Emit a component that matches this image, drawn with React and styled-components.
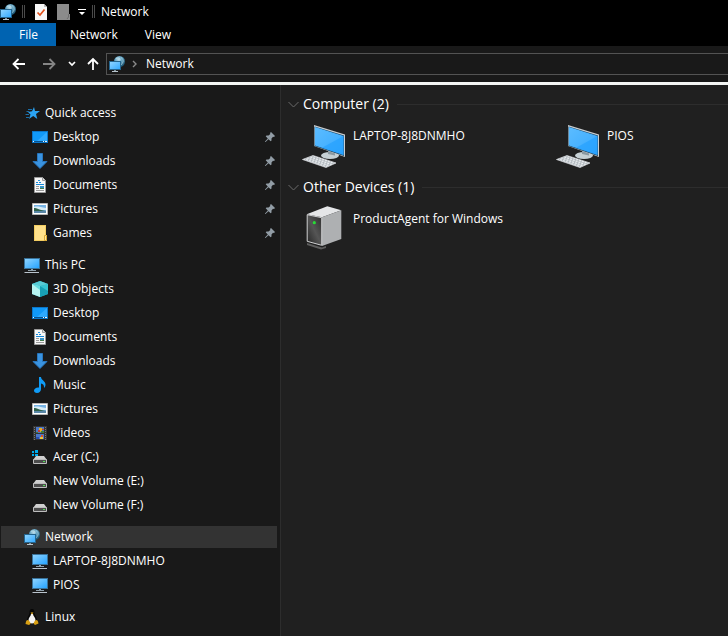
import React from "react";
import styled, { createGlobalStyle } from "styled-components";

const quickAccess = {
  name: "Quick access",
  icon: StarIcon,
  children: [
    { name: "Desktop", icon: DesktopIcon, pinned: true },
    { name: "Downloads", icon: DownloadsIcon, pinned: true },
    { name: "Documents", icon: DocumentsIcon, pinned: true },
    { name: "Pictures", icon: PicturesIcon, pinned: true },
    { name: "Games", icon: FolderIcon, pinned: true },
  ],
};

const thisPc = {
  name: "This PC",
  icon: MonitorIcon,
  children: [
    { name: "3D Objects", icon: CubeIcon },
    { name: "Desktop", icon: DesktopIcon },
    { name: "Documents", icon: DocumentsIcon },
    { name: "Downloads", icon: DownloadsIcon },
    { name: "Music", icon: MusicIcon },
    { name: "Pictures", icon: PicturesIcon },
    { name: "Videos", icon: VideosIcon },
    { name: "Acer (C:)", icon: SystemDriveIcon },
    { name: "New Volume (E:)", icon: DriveIcon },
    { name: "New Volume (F:)", icon: DriveIcon },
  ],
};

const network = {
  name: "Network",
  icon: NetworkIcon,
  selected: true,
  children: [
    { name: "LAPTOP-8J8DNMHO", icon: MonitorIcon },
    { name: "PIOS", icon: MonitorIcon },
  ],
};

const linux = { name: "Linux", icon: LinuxIcon, children: [] };

const groups = [quickAccess, thisPc, network, linux];

const sections = [
  {
    title: "Computer (2)",
    items: [
      { name: "LAPTOP-8J8DNMHO", icon: ComputerIcon },
      { name: "PIOS", icon: ComputerIcon },
    ],
  },
  {
    title: "Other Devices (1)",
    items: [{ name: "ProductAgent for Windows", icon: ServerIcon }],
  },
];

function App() {
  return (
    <Window>
      <GlobalStyle />
      <TitleBar>
        <NetworkIcon />
        <Separator />
        <QuickButton aria-label="Properties">
          <PropertiesIcon />
        </QuickButton>
        <QuickButton aria-label="New folder">
          <NewItemIcon />
        </QuickButton>
        <MenuButton aria-label="Customize Quick Access Toolbar">
          <CustomizeIcon />
        </MenuButton>
        <Separator />
        <Title>Network</Title>
      </TitleBar>
      <Ribbon>
        <Tab $file>File</Tab>
        <Tab>Network</Tab>
        <Tab>View</Tab>
      </Ribbon>
      <Toolbar>
        <NavButton aria-label="Back">
          <ArrowIcon d="M13 7H1.5M6.5 2 1.5 7l5 5" />
        </NavButton>
        <NavButton aria-label="Forward" disabled>
          <ArrowIcon d="M1 7h11.5M7.5 2l5 5-5 5" />
        </NavButton>
        <RecentButton aria-label="Recent locations">
          <svg width="8" height="6" viewBox="0 0 8 6">
            <path d="M1 1l3 3 3-3" fill="none" stroke="#fff" strokeWidth="1.7" />
          </svg>
        </RecentButton>
        <UpButton aria-label="Up">
          <ArrowIcon d="M7 13V2M2 7l5-5 5 5" />
        </UpButton>
        <AddressBar>
          <NetworkIcon />
          <svg width="7" height="8" viewBox="0 0 7 8">
            <path d="M1 1l3 3-3 3" fill="none" stroke="#8a8a8a" strokeWidth="1.4" />
          </svg>
          <Crumb>Network</Crumb>
        </AddressBar>
      </Toolbar>
      <Body>
        <Sidebar>
          {groups.map((group) => (
            <Group key={group.name}>
              <TreeItem item={group} />
              {group.children.map((child) => (
                <TreeItem key={child.name} item={child} nested />
              ))}
            </Group>
          ))}
        </Sidebar>
        <Content>
          {sections.map((section) => (
            <section key={section.title}>
              <SectionHeader>
                <svg width="11" height="7" viewBox="0 0 11 7">
                  <path d="M.5 1l5 5 5-5" fill="none" stroke="#6b6b6b" />
                </svg>
                <h2>{section.title}</h2>
                <Rule />
              </SectionHeader>
              <Tiles>
                {section.items.map(({ name, icon: Icon }) => (
                  <Tile key={name} href="#">
                    <Icon />
                    <span>{name}</span>
                  </Tile>
                ))}
              </Tiles>
            </section>
          ))}
        </Content>
      </Body>
    </Window>
  );
}

function TreeItem({ item, nested }) {
  const Icon = item.icon;
  return (
    <TreeLink href="#" $nested={nested} $selected={item.selected}>
      <Icon />
      <span>{item.name}</span>
      {item.pinned && <PinIcon />}
    </TreeLink>
  );
}

export default App;

/* icons */

function ArrowIcon({ d }) {
  return (
    <svg width="14" height="14" viewBox="0 0 14 14">
      <path d={d} fill="none" stroke="currentColor" strokeWidth="1.8" />
    </svg>
  );
}

function NetworkIcon() {
  return (
    <svg width="16" height="16" viewBox="0 0 16 16">
      <defs>
        <radialGradient id="globe" cx="0.4" cy="0.3" r="0.7">
          <stop offset="0" stopColor="#b9dcea" />
          <stop offset="0.5" stopColor="#5b9dbd" />
          <stop offset="1" stopColor="#1d5673" />
        </radialGradient>
        <linearGradient id="netScreen" x1="0" y1="0" x2="1" y2="1">
          <stop offset="0" stopColor="#8ed4ff" />
          <stop offset="1" stopColor="#35aaff" />
        </linearGradient>
      </defs>
      <circle cx="10.5" cy="5.5" r="5.5" fill="url(#globe)" />
      <path d="M7 2.5c2-1 3.5-.5 4 .5s-1.5 1.5-2 2.5M12 1.5c2 1 2.5 3 2 4.5s-1.5 2-2 3" fill="none" stroke="#d5edf5" strokeOpacity=".5" />
      <path d="M0 5h12v9H0z" fill="#24658f" />
      <path d="M1 6h10v7H1z" fill="url(#netScreen)" />
      <path d="M5 14h2v1H5z" fill="#7f929e" />
      <path d="M3 15h6v1H3z" fill="#b8c4cb" />
    </svg>
  );
}

function PropertiesIcon() {
  return (
    <svg width="12" height="16" viewBox="0 0 12 16">
      <path d="M0 0h9l3 3v13H0z" fill="#f7f7f7" />
      <path d="M9 0v3h3z" fill="#bdbdbd" />
      <path d="M2.5 8.5 5 11l4.5-5.5" fill="none" stroke="#e2511c" strokeWidth="1.7" />
    </svg>
  );
}

function NewItemIcon() {
  return (
    <svg width="13" height="16" viewBox="0 0 13 16">
      <path d="M0 0h12v10h1v6H0z" fill="#8b8b8b" />
      <path d="M11.5 10v3L10 15" fill="none" stroke="#6c6c6c" />
    </svg>
  );
}

function CustomizeIcon() {
  return (
    <svg width="8" height="8" viewBox="0 0 8 8">
      <path d="M0 1h8v1H0zM1 4h6L4 7z" fill="#fff" />
    </svg>
  );
}

function StarIcon() {
  return (
    <svg width="16" height="16" viewBox="0 0 16 16">
      <path d="M10 2l1 4h5l-4 3 1.3 5L9.200 11 5 14l1.500-4.500L4 7l4-.7z" fill="#2ba3f2" />
      <path d="M4 4.500h4M2.500 6.500H5M1.500 9.500H5M2 12.500h3" stroke="#1b6fa8" />
    </svg>
  );
}

function DesktopIcon() {
  return (
    <svg width="16" height="16" viewBox="0 0 16 16">
      <path d="M0 2h16v12H0z" fill="#0b76c9" />
      <path d="M1 3h14v9H1z" fill="#1199f8" />
      <path d="M15 3v9H5z" fill="#2ea9ff" />
      <path d="M1 12h14v1H1z" fill="#07518d" />
      <path d="M1 12h1v1H1zM11 12h1v1h-1zM13 12h2v1h-2z" fill="#e8f5ff" />
    </svg>
  );
}

function DownloadsIcon() {
  return (
    <svg width="16" height="16" viewBox="0 0 16 16">
      <path d="M5.5.5h5v8h4.500L8 15.500 1 8.500h4.500z" fill="#3a93e0" stroke="#2876bd" />
    </svg>
  );
}

function DocumentsIcon() {
  return (
    <svg width="16" height="16" viewBox="0 0 16 16">
      <path d="M2.5.5h8l3 3v12h-11z" fill="#f8f8f8" stroke="#9b9b9b" />
      <path d="M10.5.5v3h3" fill="#ddd" stroke="#9b9b9b" />
      <path d="M4 5.500h2M7 5.500h2M4 7.500h8" stroke="#1687d9" />
      <path d="M6 3.500h2" stroke="#2a96e0" />
      <path d="M4 9.500h3M4 11.500h3M4 13.500h8" stroke="#999" />
      <path d="M8 9h4v3H8z" fill="#3793c6" />
      <path d="M8 11h4v1H8z" fill="#457c4e" />
    </svg>
  );
}

function PicturesIcon() {
  return (
    <svg width="16" height="16" viewBox="0 0 16 16">
      <path d="M.5 2.500h15v11H.5z" fill="#fff" stroke="#b5b5b5" />
      <path d="M2 4h12v8H2z" fill="#77b4e6" />
      <path d="M2 6c3-1 6 0 12 1v2H2z" fill="#d8edf8" />
      <path d="M2 7c3 0 4 1.500 12 3H2z" fill="#30624c" />
      <path d="M2 10h12v2H2z" fill="#5987a7" />
    </svg>
  );
}

function FolderIcon() {
  return (
    <svg width="16" height="16" viewBox="0 0 16 16">
      <path d="M2 0h12v10h1v6H2z" fill="#f3cd62" />
      <path d="M3 1h10v9l-1 5H3z" fill="#ffe18b" />
      <path d="M12.500 15.500v-5h2v5z" fill="#ffe59b" stroke="#d9a935" />
    </svg>
  );
}

function MonitorIcon() {
  return (
    <svg width="16" height="16" viewBox="0 0 16 16">
      <defs>
        <linearGradient id="screen" x1="0" y1="0" x2="1" y2="1">
          <stop offset="0" stopColor="#8dd3ff" />
          <stop offset="1" stopColor="#27a4ff" />
        </linearGradient>
      </defs>
      <path d="M0 1h16v11H0z" fill="#3a7299" />
      <path d="M1 2h14v9H1z" fill="url(#screen)" />
      <path d="M7 12h2v1H7zM4 13h8v1H4z" fill="#91a1ac" />
      <path d="M4 14h8v1H4z" fill="#191919" />
      <path d="M1 15h14v1H0z" fill="#b9c3cc" />
    </svg>
  );
}

function CubeIcon() {
  return (
    <svg width="16" height="16" viewBox="0 0 16 16">
      <path d="M8 0l8 3v10l-8 3-8-3V3z" fill="#26b3c5" />
      <path d="M0 3l8 2v11l-8-3z" fill="#b6f4f1" />
      <path d="M0 3l8 2v4z" fill="#65dde0" />
      <path d="M16 3 8 5v11l8-3z" fill="#18a0b5" />
      <path d="M8 5l8 5V3z" fill="#36c4d1" />
      <path d="M8 0l8 3-8 2-8-2z" fill="#58cbd5" />
    </svg>
  );
}

function MusicIcon() {
  return (
    <svg width="16" height="16" viewBox="0 0 16 16">
      <path d="M7 0h2c0 3 4.500 4 4.500 7.500 0 1.500-.5 2.500-1.500 3.500.3-3-1-4-3-4.500V12c0 2-1.500 4-4 4-2 0-3-1-3-2.500C2 11.500 4.500 10 7 10.500z" fill="#109bf5" />
    </svg>
  );
}

function VideosIcon() {
  return (
    <svg width="16" height="16" viewBox="0 0 16 16">
      <path d="M1 1h14v14H1z" fill="#343434" />
      <path d="M2.500 2v13M13.500 2v13" stroke="#777" strokeDasharray="1 1" />
      <path d="M4 2h8v6H4zM4 9h8v5H4z" fill="#4b78c9" />
      <path d="M7 3h3v4H7z" fill="#e2ae25" />
      <path d="M6 5h2v2H6zM10 4h2v1h-2z" fill="#c83d31" />
      <path d="M9 6h3v2H9zM4 7h2v1H4z" fill="#427b3b" />
      <path d="M9 10h2v2H9z" fill="#d3522e" />
      <path d="M8 12h3v2H8z" fill="#ebc83f" />
      <path d="M4 12h3v2H4z" fill="#2b4fae" />
    </svg>
  );
}

function DriveShape() {
  return (
    <>
      <path d="M4 7h8l3 4H1z" fill="#cfcfcf" />
      <path d="M1.5 10.500h13v4h-13z" fill="#4c4c4c" stroke="#bdbdbd" />
      <path d="M11 12h2v1h-2z" fill="#53df55" />
    </>
  );
}

function DriveIcon() {
  return (
    <svg width="16" height="16" viewBox="0 0 16 16">
      <DriveShape />
    </svg>
  );
}

function SystemDriveIcon() {
  return (
    <svg width="16" height="16" viewBox="0 0 16 16">
      <DriveShape />
      <path d="M0 2h2v2H0zM3 1h3v3H3zM0 5h2v2H0zM3 5h3v2H3z" fill="#00adef" />
    </svg>
  );
}

function LinuxIcon() {
  return (
    <svg width="16" height="16" viewBox="0 0 16 16">
      <path d="M8 0c2 0 2.500 1.500 2.500 4 0 2 2.500 4 2.500 7.500 0 2-2 3.500-5 3.500s-5-1.500-5-3.500C3 8 5.500 6 5.500 4 5.500 1.500 6 0 8 0z" fill="#050505" />
      <path d="M7 5h2c0 2 2.500 3.500 2.500 6 0 2-1.500 3.500-3.500 3.500S4.500 13 4.500 11C4.500 8.500 7 7 7 5z" fill="#f3f3f3" />
      <path d="M6.500 3.500h3L8 5.500z" fill="#e6ad1d" />
      <path d="M3 11l2 .5 1.800 3L5 16l-3.500-1 .5-2.500zM13 11l-2 .5-1.500 3L11 16l3.500-1.500-.5-2z" fill="#d9a013" />
    </svg>
  );
}

function PinIcon() {
  return (
    <svg width="12" height="12" viewBox="0 0 12 12">
      <path d="M7 1l4 4-1 1-1-.3L7.500 7.500v2l-.8.8-2.200-2.100L1.500 11H1v-.5l2.800-3-2.100-2.200.8-.8h2L6.300 3 6 2z" fill="#929da6" />
    </svg>
  );
}

function ComputerIcon() {
  return (
    <svg width="48" height="48" viewBox="0 0 48 48">
      <defs>
        <linearGradient id="bigScreen" x1="0" y1="0" x2="1" y2="1">
          <stop offset="0" stopColor="#5cbcff" />
          <stop offset="1" stopColor="#36a9ff" />
        </linearGradient>
        <pattern id="keys" width="3" height="2" patternUnits="userSpaceOnUse" patternTransform="rotate(20)">
          <path d="M0 0h3v2H0z" fill="#a9b0b6" />
          <path d="M0 0h2.200v1.400H0z" fill="#eceff2" />
        </pattern>
      </defs>
      <ellipse cx="29" cy="34.500" rx="9" ry="3.500" fill="#c6d0d4" />
      <path d="M27 29l7 2.500v3l-7-1.500z" fill="#8b989f" />
      <path d="M13 4l31 9.500V36L13 25z" fill="#c9ced1" />
      <path d="M13.500 5.500 43 14.500v20.500L13.500 25z" fill="#17415e" />
      <path d="M14 6l28.500 9v19L14 24.500z" fill="url(#bigScreen)" />
      <path d="M21 26.800 42.500 15v19z" fill="#1f9fff" fillOpacity=".6" />
      <path d="M1.500 38.500 12 34.500l23 7.500-10 4.500z" fill="url(#keys)" stroke="#dfe3e6" strokeWidth=".7" />
    </svg>
  );
}

function ServerIcon() {
  return (
    <svg width="48" height="48" viewBox="0 0 48 48">
      <defs>
        <linearGradient id="front" x1="1" y1="0" x2="0" y2="1">
          <stop offset="0" stopColor="#2d2d2d" />
          <stop offset=".5" stopColor="#555" />
          <stop offset="1" stopColor="#242424" />
        </linearGradient>
      </defs>
      <path d="M6 39l15 4.500 4-1.500v2l-5 1.500L6 41z" fill="#5e5e5e" />
      <path d="M5.700 10.300 26.300 2.300l14 4L21 13.300z" fill="#e5e6e8" />
      <path d="M21 13.300l19.300-7V35L21 42z" fill="#aeb0b2" />
      <path d="M6.200 10.700 20.700 13.700v27.600L6.200 37.300z" fill="url(#front)" stroke="#d0d1d3" />
      <circle cx="13.300" cy="18.700" r="1.600" fill="#28dc38" />
    </svg>
  );
}

const GlobalStyle = createGlobalStyle`
  * {
    box-sizing: border-box;
  }
  body {
    margin: 0;
    background: #202020;
    color: #fff;
    font-family: "Open Sans", "Noto Sans", sans-serif;
    font-size: 12px;
    line-height: 18px;
  }
  button {
    display: flex;
    align-items: center;
    justify-content: center;
    padding: 0;
    border: 0;
    background: none;
    color: inherit;
    font: inherit;
  }
  a {
    color: inherit;
    text-decoration: none;
  }
  svg {
    display: block;
    flex-shrink: 0;
  }
`;

const Window = styled.div`
  display: flex;
  flex-direction: column;
  min-height: 100vh;
`;

const TitleBar = styled.header`
  display: flex;
  align-items: center;
  height: 23px;
  background: #000;
`;

const Separator = styled.span`
  width: 3px;
  height: 13px;
  margin: 0 6px;
  border: solid #4a4a4a;
  border-width: 0 1px;
`;

const QuickButton = styled.button`
  width: 23px;
  height: 22px;
  && {
    justify-content: flex-end;
  }
  &:first-of-type {
    width: 16px;
  }
`;

const MenuButton = styled.button`
  width: 16px;
  height: 22px;
  && {
    justify-content: flex-end;
  }
`;

const Title = styled.h1`
  margin: 0;
  font-size: 12px;
  font-weight: 400;
`;

const Ribbon = styled.nav`
  display: flex;
  height: 23px;
  background: #000;
`;

const Tab = styled.button`
  && {
    padding: 0 13px 0 14px;
    ${({ $file }) => $file && "width: 56px; background: #0063b1;"}
  }
`;

const Toolbar = styled.div`
  display: flex;
  align-items: center;
  height: 39px;
  padding: 0 0 1px 12px;
  background: #191919;
  border-bottom: 3px solid #f4f6f4;
`;

const NavButton = styled.button`
  width: 14px;
  height: 22px;
  margin-right: 16px;
  &:disabled {
    color: #858585;
  }
`;

const RecentButton = styled.button`
  width: 8px;
  height: 22px;
  margin-left: -4px;
`;

const UpButton = styled.button`
  width: 14px;
  height: 22px;
  margin: 0 6px 0 10px;
`;

const AddressBar = styled.div`
  display: flex;
  flex: 1;
  align-items: center;
  gap: 7px;
  height: 22px;
  padding-left: 2px;
  border: 1px solid #535353;
  border-right: 0;
`;

const Crumb = styled.button``;

const Body = styled.div`
  display: flex;
  flex: 1;
`;

const Sidebar = styled.nav`
  flex: 0 0 281px;
  padding: 17px 3px 0 1px;
  background: #191919;
  border-right: 1px solid #2d2d2d;
`;

const Group = styled.div`
  & + & {
    margin-top: 10px;
  }
`;

const TreeLink = styled.a`
  display: flex;
  align-items: center;
  gap: 5px;
  height: 22px;
  padding: 0 1px 0 ${({ $nested }) => ($nested ? 31 : 23)}px;
  background: ${({ $selected }) => ($selected ? "#333" : "none")};
  & + & {
    margin-top: 2px;
  }
  > span {
    flex: 1;
  }
`;

const Content = styled.main`
  flex: 1;
  padding: 10px 0 0 7px;
`;

const SectionHeader = styled.div`
  display: flex;
  align-items: center;
  gap: 4px;
  > h2 {
    margin: 0;
    font-size: 14px;
    font-weight: 400;
  }
`;

const Rule = styled.span`
  flex: 1;
  height: 1px;
  margin-left: 4px;
  background: #2d2d2d;
`;

const Tiles = styled.div`
  display: grid;
  grid-template-columns: 254px 1fr;
  padding: 8px 0 9px 13px;
`;

const Tile = styled.a`
  display: flex;
  gap: 4px;
  > span {
    padding-top: 6px;
  }
`;
